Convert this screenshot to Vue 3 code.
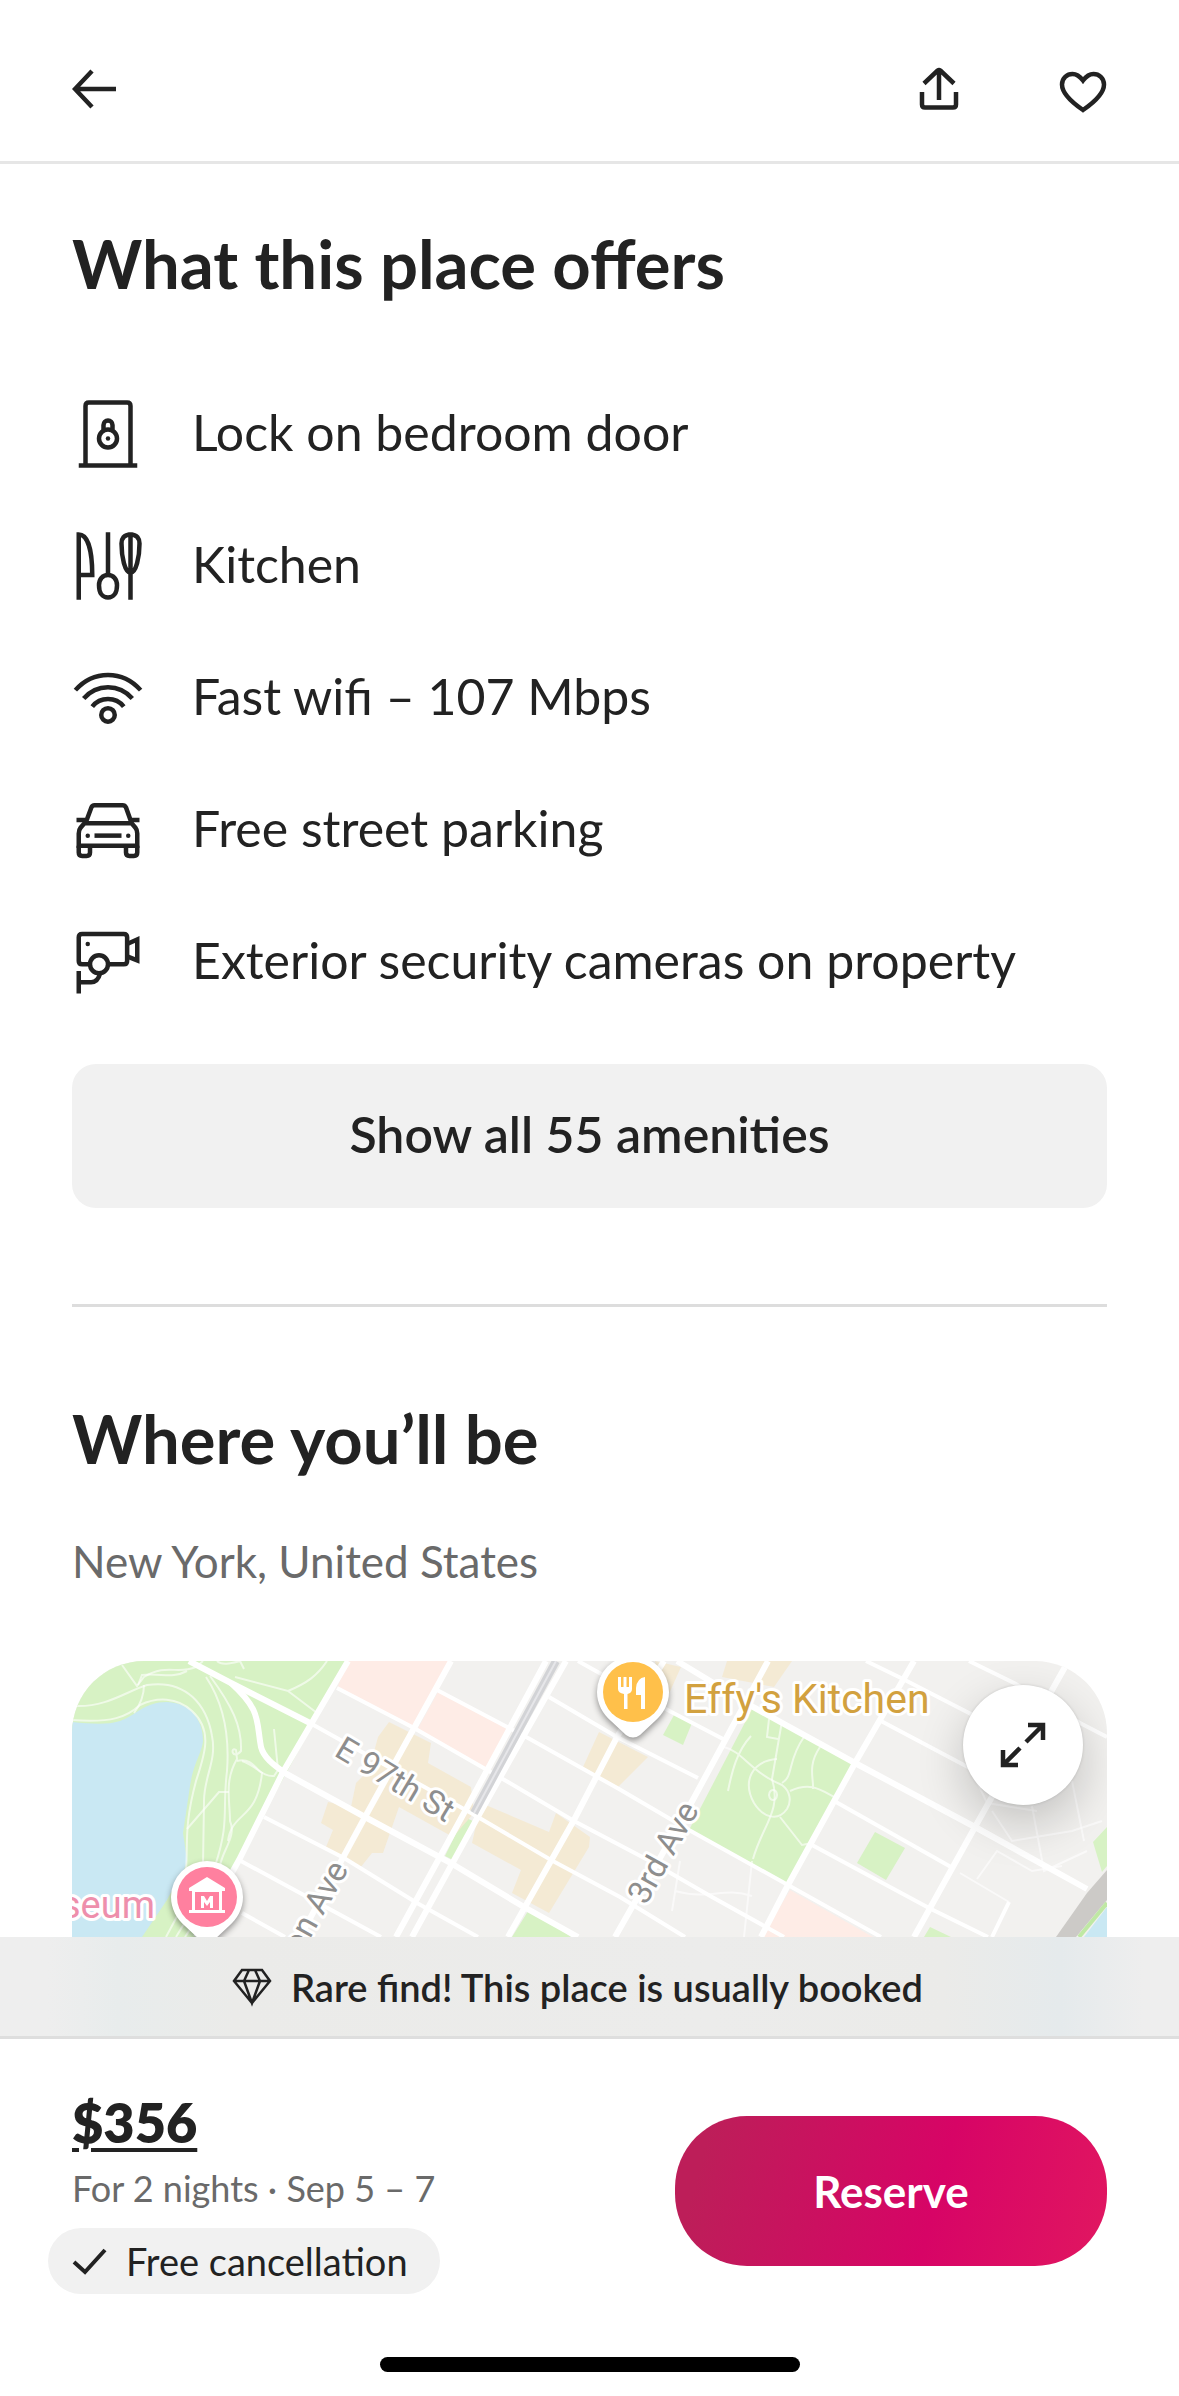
<template>
  <div class="listing">
    <header class="topbar">
      <button type="button" class="topbar__button" aria-label="Back">
        <svg viewBox="0 0 48 48" class="icon icon--bar"><path d="M20 6 L3 24 L20 42 M3 24 H44" /></svg>
      </button>
      <div class="topbar__actions">
        <button type="button" class="topbar__button" aria-label="Share">
          <svg viewBox="0 0 48 48" class="icon icon--bar">
            <path d="M9 18.500 L22.600 5.500 Q24 4.500 25.400 5.500 L39 18.500 M24 6 V35" />
            <path d="M7 27 V39.500 Q7 42.500 10 42.500 H38 Q41 42.500 41 39.500 V27" />
          </svg>
        </button>
        <button type="button" class="topbar__button" aria-label="Save">
          <svg viewBox="0 0 48 48" class="icon icon--bar">
            <path d="M24 45 C16 39.500 3 30 3 19.500 C3 13 8 9 13.500 9 C18 9 21 11.500 24 15.500 C27 11.500 30 9 34.500 9 C40 9 45 13 45 19.500 C45 30 32 39.500 24 45 Z" />
          </svg>
        </button>
      </div>
    </header>

    <main class="content">
      <section class="offers">
        <h2 class="heading">What this place offers</h2>
        <ul class="offers__list">
          <li v-for="item in amenities" :key="item.label" class="offers__item">
            <svg viewBox="0 0 32 32" class="icon" aria-hidden="true">
              <path v-for="d in item.paths" :key="d" :d="d" />
              <circle v-for="(dot, i) in item.dots" :key="i" :cx="dot[0]" :cy="dot[1]" r="1" class="icon__dot" />
            </svg>
            <span class="offers__label">{{ item.label }}</span>
          </li>
        </ul>
        <button type="button" class="offers__more">Show all 55 amenities</button>
      </section>

      <section class="location">
        <h2 class="heading">Where you’ll be</h2>
        <p class="location__place">New York, United States</p>

        <div class="map">
          <svg viewBox="0 0 1035 276" preserveAspectRatio="xMidYMin slice" class="map__canvas" role="img" aria-label="Map">
            <rect width="1035" height="276" fill="#f2f1ef" />
            <path d="M0 0 H276 L124 276 H0 Z" class="map__park" />
            <path d="M0 61 C20 63 35 64 48 60 C65 54 72 41 95 41 C120 42 131 60 131 80 C129 95 122 100 118 125 L111 172 L115 199 C112 215 100 228 95 239 L70 276 H0 Z" class="map__water" />
            <path v-for="d in parks" :key="d" :d="d" class="map__park" />
            <path v-for="d in shops" :key="d" :d="d" class="map__shops" />
            <path v-for="d in hospitals" :key="d" :d="d" class="map__hospital" />
            <path v-for="d in trails" :key="d" :d="d" class="map__trail" />
            <path v-for="d in streets" :key="d" :d="d" class="map__street" />
            <path v-for="d in avenues" :key="d" :d="d" class="map__avenue" />
            <path d="M484 0 L402 152" class="map__rail" />
            <path d="M484 0 L402 152" class="map__rail-gap" />
            <path d="M1035 209 V239 L1004 276 H984 L1015 232 Z" fill="#cccac7" />
            <path d="M1035 246 L1012 276 H1035 Z" class="map__water" />
            <path d="M1035 242 L1007 276" stroke="#bfe8a4" stroke-width="4" />

            <text x="261" y="94" transform="rotate(31 261 94)" class="map__label">E 97th St</text>
            <text x="277" y="208" transform="rotate(-61 277 208)" text-anchor="end" class="map__label">on Ave</text>
            <text x="574" y="245" transform="rotate(-61 574 245)" class="map__label">3rd Ave</text>
            <text x="83" y="257" text-anchor="end" class="map__label map__label--museum">seum</text>
            <text x="612" y="52" class="map__label map__label--food">Effy's Kitchen</text>

            <g v-for="pin in pins" :key="pin.color" :transform="`translate(${pin.x} ${pin.y})`">
              <path d="M-36 0 A36 36 0 1 1 36 0 C36 12 30 22 22 29 L7 43 Q0 48 -7 43 L-22 29 C-30 22 -36 12 -36 0 Z" class="map__pin" />
              <circle r="30" :fill="pin.color" />
              <path :d="pin.glyph" fill="#fff" fill-rule="evenodd" />
            </g>
          </svg>
          <button type="button" class="map__expand" aria-label="Expand map">
            <svg viewBox="0 0 48 48" class="icon icon--bar">
              <path d="M27 21 L44 4 M29 4 H44 V19 M21 27 L4 44 M4 29 V44 H19" />
            </svg>
          </button>
        </div>
      </section>
    </main>

    <aside class="notice">
      <svg viewBox="0 0 40 40" class="icon notice__icon" aria-hidden="true">
        <path d="M10 3 H30 L38 14 L20 36 L2 14 Z M2 14 H38 M17 3 L12 14 L20 36 L28 14 L23 3" />
      </svg>
      <span>Rare find! This place is usually booked</span>
    </aside>

    <footer class="booking">
      <div class="booking__row">
        <div class="booking__info">
          <a href="#" class="booking__price">$356</a>
          <p class="booking__dates">For 2 nights · Sep 5 – 7</p>
          <p class="booking__policy">
            <svg viewBox="0 0 36 36" class="icon booking__check" aria-hidden="true"><path d="M2 19 L13 29 L33 7" /></svg>
            <span>Free cancellation</span>
          </p>
        </div>
        <button type="button" class="booking__reserve">Reserve</button>
      </div>
      <div class="booking__handle"></div>
    </footer>
  </div>
</template>

<script setup>
const amenities = [
  {
    label: 'Lock on bedroom door',
    paths: [
      'M6 30 V3.500 Q6 2 7.500 2 H24.500 Q26 2 26 3.500 V30 M3 30 H29',
      'M16 14 A4 4 0 1 0 16 22 A4 4 0 1 0 16 14 Z',
      'M14 14 V12 A2 2 0 0 1 18 12 V14',
    ],
    dots: [[16, 18]],
  },
  {
    label: 'Kitchen',
    paths: [
      'M3 31 V2 C7 2 9 9 9 20 H3',
      'M16 1 V20 M16 20 C13.500 20 12 22 12 24.500 C12 28 13.500 30 16 30 C18.500 30 20 28 20 24.500 C20 22 18.500 20 16 20 Z',
      'M26 1 V31 M26 2 C23 2 22 4 22 6 C22 12 23.500 19 26 19 C28.500 19 30 12 30 6 C30 4 29 2 26 2 Z',
    ],
    dots: [],
  },
  {
    label: 'Fast wifi – 107 Mbps',
    paths: [
      'M1.500 12.500 C9.500 3.500 22.500 3.500 30.500 12.500',
      'M5.200 16.200 C11 9.500 21 9.500 26.800 16.200',
      'M9 19.800 C12.500 15.300 19.500 15.300 23 19.800',
      'M16 20.500 A3 3 0 1 0 16 26.500 A3 3 0 1 0 16 20.500 Z',
    ],
    dots: [],
  },
  {
    label: 'Free street parking',
    paths: [
      'M6 13 L8.600 6 Q9 5 10 5 H22.500 Q23.500 5 24 6 L26.500 13 M2 11.500 H6 M26 11.500 H30',
      'M3 23 V17.500 Q3 16 3.800 15 L5.500 13 H26.500 L28.200 15 Q29 16 29 17.500 V23 Z',
      'M3 23 V26 Q3 27.500 4.500 27.500 H6.500 Q8 27.500 8 26 V23 M24 23 V26 Q24 27.500 25.500 27.500 H27.500 Q29 27.500 29 26 V23',
      'M10 18.500 H22',
    ],
    dots: [[7, 18.5], [25, 18.5]],
  },
  {
    label: 'Exterior security cameras on property',
    paths: [
      'M8 17 H4.500 Q3 17 3 15.500 V5 Q3 3.500 4.500 3.500 H23 Q24.500 3.500 24.500 5 V15.500 Q24.500 17 23 17 H16',
      'M12 13 A4 4 0 1 0 12 21 A4 4 0 1 0 12 13 Z',
      'M24.500 8 L29 6 V15.300 L24.500 13.500',
      'M3 20 V30 M3 25 H8.500 Q11.500 25 12.500 21',
    ],
    dots: [[7, 8]],
  },
]

const parks = [
  'M681 46 L783 102 L716 224 L617 169 Z',
  'M803 171 L833 187 L814 219 L785 202 Z',
  'M602 54 L620 62 L611 84 L591 74 Z',
  'M458 247 L499 276 H440 Z',
  'M858 266 L879 276 H852 Z',
  'M392 156 L401 160 L381 199 L373 195 Z',
  'M1035 166 L1021 181 L1030 211 L1035 205 Z',
]

const shops = [
  'M317 61 L359 82 L356 102 L399 126 L402 152 L381 176 L327 146 L311 192 L300 192 L288 207 L254 186 L261 169 L249 162 L256 141 L279 146 L284 122 L297 109 L306 76 Z',
  'M409 142 L477 171 L484 152 L518 176 L517 186 L477 252 L440 232 L449 209 L400 182 Z',
  'M527 71 L576 96 L546 126 L511 106 Z',
  'M655 0 H720 L702 26 L650 16 Z',
  'M583 0 L609 6 L591 46 Z',
]

const hospitals = [
  'M276 0 H379 L342 67 L265 27 Z',
  'M366 31 L436 67 L415 107 L345 69 Z',
  'M718 229 L801 276 H690 Z',
]

// footpaths and small lanes
const trails = [
  'M0 59 C40 62 55 56 68 44 C85 36 105 36 120 50 C142 70 132 95 124 120 C112 165 116 180 114 210',
  'M4 45 C35 46 55 30 75 24 C115 18 135 45 140 75 C145 100 132 115 132 140 L131 205',
  'M50 4 L65 25 L72 16 C95 2 105 14 124 6 L131 0',
  'M66 24 L70 14 C90 12 100 18 115 10',
  'M72 24 C72 34 68 44 62 52',
  'M134 16 C150 40 158 70 155 110 C150 150 158 160 143 205',
  'M138 15 C160 45 170 65 169 90 C160 100 158 85 164 89 L165 98 C152 120 158 140 158 160 C165 175 150 190 148 205',
  'M115 168 L147 131 H157 M165 100 C180 96 185 110 190 112 C185 160 160 150 156 180',
  'M170 100 C185 105 190 116 202 115 L206 109 L202 68',
  'M145 0 C150 5 160 2 168 0 L172 8',
  'M163 16 L216 30 C235 22 245 15 255 0 M216 30 L245 52',
  'M94 276 L124 220 M104 276 L132 230 M113 276 L140 236',
  'M710 60 L700 118 C710 150 690 165 681 198',
  'M679 75 C665 90 660 110 656 130 M652 86 C670 90 680 112 710 124 C718 130 720 140 715 148 C705 162 690 155 682 142 C670 120 680 100 705 98',
  'M718 130 C740 120 750 130 764 137 M748 86 C735 105 742 118 741 128 M732 76 C715 100 722 115 710 122',
  'M708 156 L730 184 L740 182 M697 58 L695 76 L706 78',
  'M701 129 a4 5 0 1 0 0.100 0 Z',
  'M603 230 C640 240 650 225 680 235 M680 200 L672 276 M608 200 L600 250',
  'M888 212 L937 241 M920 150 L940 180 L1000 170 L1030 160 M960 145 L972 210 L1015 190',
  'M1000 120 L1012 180 M905 218 L925 190 L960 210 L990 205 M900 110 L915 142 L965 150',
]

const streets = [
  'M238 62 L399 152 L479 199 L548 236 L613 276',
  'M265 27 L342 67 L436 121 L502 160 L576 199 L640 236 L712 276',
  'M365 29 L456 77 L547 128 L617 169 L716 224 L809 276',
  'M477 36 L545 76 L626 117',
  'M506 0 L565 33 L653 79',
  'M794 0 L829 17 L897 52 L960 88',
  'M809 60 L892 104 L926 122',
  'M897 0 L942 22 L1008 62 L1035 76',
  'M192 156 L272 197 L345 242 L406 276',
  'M167 199 L217 226 L309 276',
  'M170 252 L213 276',
  'M764 141 L879 206',
  'M740 184 L857 247 L916 276',
  'M937 241 L920 276',
]

const avenues = [
  'M276 0 L211 111 L167 199 L124 276',
  'M379 0 L293 156 L228 276',
  'M474 0 L392 152 L324 276',
  'M494 0 L408 152 L340 276',
  'M592 0 L545 76 L502 159 L436 276',
  'M696 0 L617 146 L543 276',
  'M842 0 L783 102 L716 224 L689 276',
  'M993 6 L903 166 L842 276',
  'M211 111 L293 156 L377 201 L452 246 L506 276',
  'M605 0 L681 46 L783 102 L903 166 L1015 228',
  'M117 0 L159 22 L238 62',
  'M159 22 C190 50 184 60 189 86 C192 98 205 106 213 112',
]

const pins = [
  {
    x: 561,
    y: 31,
    color: '#ffc04a',
    glyph: 'M-15 -15 h3 v10 h2.500 v-10 h3 v10 h2.500 v-10 h3 v12 q0 4 -4.500 5 v15 h-3.500 v-15 q-6 -1 -6 -5 Z M12 -15 V17 H8 V3 H3 V-4 Q4 -14 12 -15 Z',
  },
  {
    x: 135,
    y: 236,
    color: '#ff809f',
    glyph: 'M0 -20 L18 -9 V-6 H-18 V-9 Z M-15 -6 H15 V13 H18 V16 H-18 V13 H-15 Z M-12 -5 V13 H12 V-5 Z M-6 11 V-1 H-3 L0 4 L3 -1 H6 V11 H3 V5 L0 9 L-3 5 V11 Z',
  },
]
</script>

<style>
body {
  margin: 0;
  background: #fff;
}
</style>

<style scoped>
.listing {
  min-height: 100vh;
  display: flex;
  flex-direction: column;
  color: #222;
  font-family: Lato, "Liberation Sans", sans-serif;
}

button {
  padding: 0;
  border: 0;
  color: inherit;
  font: inherit;
  cursor: pointer;
}

h2,
p,
ul {
  margin: 0;
  padding: 0;
}

.icon {
  flex: none;
  width: 72px;
  height: 72px;
  fill: none;
  stroke: currentColor;
  stroke-width: 2;
}

.icon--bar {
  display: block;
  width: 48px;
  height: 48px;
  stroke-width: 4.5;
}

.icon__dot {
  fill: currentColor;
  stroke: none;
}

.topbar {
  display: flex;
  justify-content: space-between;
  padding: 65px 72px 48px;
  border-bottom: 3px solid #e6e6e6;
}

.topbar__button {
  background: none;
}

.topbar__actions {
  display: flex;
  gap: 96px;
}

.content {
  padding: 0 72px;
}

.heading {
  font-size: 67px;
  line-height: 78px;
  font-weight: 700;
}

.offers {
  padding: 60px 0 96px;
  border-bottom: 3px solid #ddd;
}

.offers__list {
  display: grid;
  gap: 60px;
  padding: 96px 0 66px;
  list-style: none;
}

.offers__item {
  display: flex;
  align-items: center;
  gap: 48px;
  height: 72px;
}

.offers__label {
  padding-bottom: 4px;
  font-size: 50px;
  line-height: 60px;
}

.offers__more {
  width: 100%;
  height: 144px;
  padding-bottom: 4px;
  border-radius: 24px;
  background: #f1f1f1;
  font-size: 50px;
  font-weight: 600;
}

.location {
  padding-top: 92px;
}

.location__place {
  padding: 56px 0 72px;
  color: #6a6a6a;
  font-size: 44px;
  line-height: 56px;
}

.map {
  position: relative;
  height: 276px;
  overflow: hidden;
  border-radius: 72px 72px 0 0;
}

.map__canvas {
  display: block;
  width: 100%;
  height: 100%;
}

.map__park {
  fill: #d7f2c4;
}

.map__water {
  fill: #c9e8f3;
}

.map__shops {
  fill: #f4ead4;
}

.map__hospital {
  fill: #feece6;
}

.map__trail {
  fill: none;
  stroke: #fff;
  stroke-opacity: 0.6;
  stroke-width: 2;
}

.map__street {
  fill: none;
  stroke: #fff;
  stroke-width: 4;
}

.map__avenue {
  fill: none;
  stroke: #fff;
  stroke-width: 6;
}

.map__rail {
  stroke: #d2d3d6;
  stroke-width: 8;
}

.map__rail-gap {
  stroke: #e6e6e9;
  stroke-width: 2;
}

.map__label {
  fill: #8e8e8e;
  stroke: #fff;
  stroke-width: 6;
  stroke-linejoin: round;
  paint-order: stroke;
  font-family: Roboto, sans-serif;
  font-size: 33px;
}

.map__label--museum {
  fill: #ee8fac;
  font-size: 38px;
}

.map__label--food {
  fill: #d2a13f;
  font-size: 41px;
}

.map__pin {
  fill: #fff;
  filter: drop-shadow(0 3px 3px rgba(0, 0, 0, 0.4));
}

.map__expand {
  position: absolute;
  top: 24px;
  right: 24px;
  display: grid;
  place-items: center;
  width: 120px;
  height: 120px;
  border-radius: 50%;
  background: #fff;
  box-shadow: 0 0 3px rgba(0, 0, 0, 0.15), 0 18px 48px rgba(0, 0, 0, 0.2);
}

.notice {
  display: flex;
  align-items: center;
  justify-content: center;
  gap: 19px;
  height: 99px;
  padding-right: 24px;
  border-bottom: 3px solid #dedede;
  background: linear-gradient(90deg, #eeeeee 4%, #e8ecec 10%, #ebebe9 20%, #ececeb 60%, #ebebe9 80%, #e5eaec 90%, #eeeeee 97%);
  font-size: 38px;
  line-height: 44px;
  font-weight: 600;
}

.notice__icon {
  width: 40px;
  height: 40px;
  stroke-width: 2.5;
}

.booking {
  padding: 51px 72px 24px;
}

.booking__row {
  display: flex;
  align-items: flex-start;
  justify-content: space-between;
}

.booking__price {
  display: block;
  color: inherit;
  font-size: 54px;
  line-height: 66px;
  font-weight: 800;
  text-decoration-thickness: 4px;
  text-underline-offset: 5px;
}

.booking__dates {
  padding: 8px 0 16px;
  color: #6a6a6a;
  font-size: 36px;
  line-height: 48px;
}

.booking__policy {
  display: flex;
  align-items: center;
  gap: 18px;
  width: fit-content;
  height: 66px;
  margin-left: -24px;
  padding: 0 32px 0 24px;
  border-radius: 33px;
  background: #f1f1f1;
  font-size: 38px;
  line-height: 44px;
}

.booking__check {
  width: 36px;
  height: 36px;
  stroke-width: 4;
}

.booking__reserve {
  width: 432px;
  height: 150px;
  margin-top: 26px;
  border-radius: 72px;
  background: linear-gradient(105deg, #bd1e59 8%, #d70466 60%, #e01561 96%);
  color: #fff;
  font-size: 44px;
  font-weight: 700;
}

.booking__handle {
  width: 420px;
  height: 15px;
  margin: 63px auto 0;
  border-radius: 8px;
  background: #000;
}
</style>
